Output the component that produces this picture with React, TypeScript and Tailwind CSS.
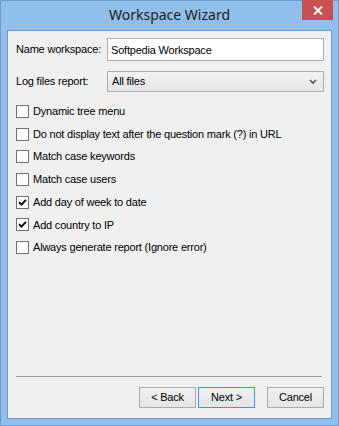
import React, { useState } from 'react';

const options = [
    { label: 'Dynamic tree menu', checked: false },
    { label: 'Do not display text after the question mark (?) in URL', checked: false },
    { label: 'Match case keywords', checked: false },
    { label: 'Match case users', checked: false },
    { label: 'Add day of week to date', checked: true },
    { label: 'Add country to IP', checked: true },
    { label: 'Always generate report (Ignore error)', checked: false },
];

const CheckBox: React.FC<{ checked: boolean; onToggle: () => void }> = ({ checked, onToggle }) => (
    <span
        onClick={onToggle}
        className="w-[13px] h-[13px] border border-[#707070] bg-white flex items-center justify-center shrink-0"
    >
        {checked && (
            <svg width="9" height="9" viewBox="0 0 9 9">
                <path d="M1 4.2 L3.4 6.6 L8 1.8" stroke="#000" strokeWidth="1.8" fill="none" />
            </svg>
        )}
    </span>
);

export default function App() {
    const [checks, setChecks] = useState(options.map(o => o.checked));
    const [name, setName] = useState('Softpedia Workspace');

    return (
        <div
            className="w-[339px] h-[426px] bg-[#90bfeb] border border-[#6b9bd1] flex flex-col px-[6px] pb-[6px] text-[11px] tracking-[-0.2px] text-black"
            style={{ fontFamily: '"Liberation Sans", Arial, sans-serif' }}
        >
            <div className="h-[29px] relative flex items-center justify-center shrink-0">
                <span className="text-[14px] tracking-normal text-[#222] pb-[2px]" style={{ fontFamily: '"Noto Sans", "Open Sans", sans-serif' }}>
                    Workspace Wizard
                </span>
                <div className="absolute right-[-1px] top-[-1px] w-[31px] h-[20px] bg-[#c75050] flex items-center justify-center">
                    <svg width="10" height="9" viewBox="0 0 10 9">
                        <path d="M1 0.5 L9 8.5 M9 0.5 L1 8.5" stroke="#fff" strokeWidth="2" />
                    </svg>
                </div>
            </div>

            <div className="flex-1 bg-[#f0f0f0] border border-[#6e99c8] flex flex-col pl-[8px] pr-[7px] pt-[7px] pb-[10px]">
                <div className="flex items-center h-[23px]">
                    <span className="w-[91px] shrink-0">Name workspace:</span>
                    <input
                        value={name}
                        onChange={e => setName(e.target.value)}
                        className="flex-1 h-[23px] border border-[#abadb3] bg-white px-[3px] outline-none text-[11px] tracking-[-0.2px]"
                    />
                </div>
                <div className="flex items-center h-[21px] mt-[10px]">
                    <span className="w-[91px] shrink-0">Log files report:</span>
                    <div className="flex-1 h-[21px] border border-[#acacac] bg-gradient-to-b from-[#f2f2f2] to-[#e5e5e5] flex items-center justify-between pl-[4px] pr-[6px]">
                        <span>All files</span>
                        <svg width="8" height="6" viewBox="0 0 8 6">
                            <path d="M1 1 L4 4 L7 1" stroke="#555" strokeWidth="1.6" fill="none" />
                        </svg>
                    </div>
                </div>

                <div className="flex flex-col mt-[8px]">
                    {options.map((o, i) => (
                        <label key={o.label} className="h-[22.7px] flex items-center gap-[4px]">
                            <CheckBox
                                checked={checks[i]}
                                onToggle={() => setChecks(c => c.map((v, j) => (j === i ? !v : v)))}
                            />
                            <span>{o.label}</span>
                        </label>
                    ))}
                </div>

                <div className="flex-1" />

                <div className="h-px bg-[#a0a0a0] mr-[2px]" />

                <div className="flex justify-end mt-[10px]">
                    <button className="w-[57px] h-[21px] border border-[#acacac] bg-gradient-to-b from-[#f0f0f0] to-[#e5e5e5]">
                        &lt; Back
                    </button>
                    <button className="w-[57px] h-[21px] ml-[2px] border border-[#3399ff] bg-gradient-to-b from-[#f0f0f0] to-[#e5e5e5]">
                        Next &gt;
                    </button>
                    <button className="w-[57px] h-[21px] ml-[12px] border border-[#acacac] bg-gradient-to-b from-[#f0f0f0] to-[#e5e5e5]">
                        Cancel
                    </button>
                </div>
            </div>
        </div>
    );
}
